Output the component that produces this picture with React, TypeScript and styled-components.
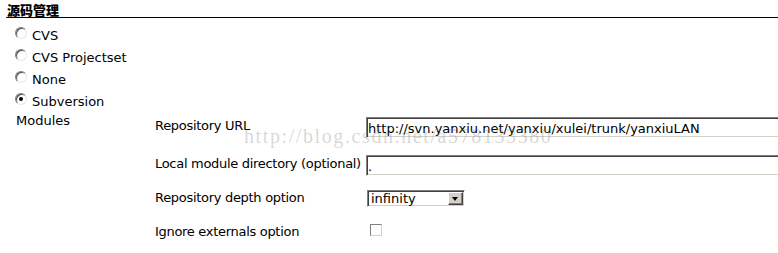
import React from 'react';
import styled, { createGlobalStyle } from 'styled-components';

const GlobalStyle = createGlobalStyle`
    body {
        margin: 0;
        background: #fff;
        font-family: "DejaVu Sans", Verdana, sans-serif;
        font-size: 13px;
        color: #000;
    }
`;

const Page = styled.div`
    position: relative;
    width: 778px;
    height: 253px;
    overflow: hidden;
`;

const SectionHeader = styled.div`
    margin-left: 6px;
    padding: 3px 0 0 1px;
    height: 14px;
    line-height: 14px;
    font-family: "Noto Sans CJK SC", sans-serif;
    font-size: 13px;
    font-weight: 900;
    border-bottom: 1px solid #000;
`;

const RadioList = styled.div`
    padding: 6px 0 0 15px;
`;

const RadioRow = styled.label`
    display: flex;
    align-items: center;
    gap: 5px;
    height: 22px;
`;

const Radio = styled.input.attrs({ type: 'radio' })`
    appearance: none;
    margin: 0 0 4px 0;
    width: 12px;
    height: 12px;
    border-radius: 50%;
    border: 1px solid #808080;
    border-right-color: #e8e8e8;
    border-bottom-color: #e8e8e8;
    box-shadow: inset 1px 1px 0 #505050;
    background: #fff;
    position: relative;
    &:checked::after {
        content: '';
        position: absolute;
        left: 3px;
        top: 3px;
        width: 4px;
        height: 4px;
        border-radius: 50%;
        background: #000;
    }
`;

const ModulesBlock = styled.div`
    display: grid;
    grid-template-columns: 139px 1fr;
    padding-left: 16px;
`;

const ModulesLabel = styled.div`
    padding-top: 1px;
`;

const Fields = styled.div`
    padding-top: 5px;
`;

const FieldRow = styled.div<{ $h: number }>`
    display: grid;
    grid-template-columns: 211px 1fr;
    align-items: start;
    height: ${p => p.$h}px;
`;

const FieldLabel = styled.div`
    padding-top: 1px;
    white-space: nowrap;
    letter-spacing: -0.3px;
`;

const TextBox = styled.input.attrs({ type: 'text', readOnly: true })`
    box-sizing: border-box;
    width: 440px;
    height: 21px;
    margin: 0;
    padding: 1px 1px 0 1px;
    font-family: "DejaVu Sans", Verdana, sans-serif;
    font-size: 13px;
    color: #000;
    border: 1px solid #808080;
    border-right-color: #fff;
    border-bottom-color: #fff;
    box-shadow: inset 1px 1px 0 #404040, inset -1px -1px 0 #d4d0c8;
    outline: none;
`;

const SelectBox = styled.div`
    box-sizing: border-box;
    display: flex;
    width: 98px;
    height: 17px;
    margin-left: 1px;
    margin-top: 1px;
    border: 1px solid #808080;
    border-right-color: #fff;
    border-bottom-color: #fff;
    box-shadow: inset 1px 1px 0 #404040, inset -1px -1px 0 #d4d0c8;
    padding: 1px;
`;

const SelectText = styled.span`
    flex: 1;
    padding-left: 2px;
    line-height: 13px;
`;

const DropButton = styled.span`
    box-sizing: border-box;
    display: flex;
    align-items: center;
    justify-content: center;
    width: 15px;
    background: #d4d0c8;
    border: 1px solid #fff;
    border-right-color: #404040;
    border-bottom-color: #404040;
    box-shadow: inset -1px -1px 0 #808080;
    &::after {
        content: '';
        margin: 1px 1px 0 0;
        border-left: 3px solid transparent;
        border-right: 3px solid transparent;
        border-top: 4px solid #000;
    }
`;

const CheckBox = styled.input.attrs({ type: 'checkbox' })`
    appearance: none;
    margin: 1px 0 0 4px;
    width: 12px;
    height: 12px;
    border: 1px solid #808080;
    border-right-color: #d4d0c8;
    border-bottom-color: #d4d0c8;
    background: #fff;
`;

// csdn watermark lying over the form
const Watermark = styled.div`
    position: absolute;
    left: 244px;
    top: 125px;
    font-family: "Liberation Serif", serif;
    font-size: 20px;
    letter-spacing: 1.6px;
    color: rgba(120, 120, 120, 0.3);
    pointer-events: none;
    white-space: nowrap;
`;

const scmOptions = [
    { name: 'CVS', checked: false },
    { name: 'CVS Projectset', checked: false },
    { name: 'None', checked: false },
    { name: 'Subversion', checked: true },
];

const App = () => {
  return (
    <Page>
      <GlobalStyle />
      <SectionHeader>源码管理</SectionHeader>
      <RadioList>
        {scmOptions.map(o => (
          <RadioRow key={o.name}>
            <Radio name="scm" defaultChecked={o.checked} />
            {o.name}
          </RadioRow>
        ))}
      </RadioList>
      <ModulesBlock>
        <ModulesLabel>Modules</ModulesLabel>
        <Fields>
          <FieldRow $h={38}>
            <FieldLabel>Repository URL</FieldLabel>
            <TextBox value="http://svn.yanxiu.net/yanxiu/xulei/trunk/yanxiuLAN" />
          </FieldRow>
          <FieldRow $h={34}>
            <FieldLabel>Local module directory (optional)</FieldLabel>
            <TextBox value="." />
          </FieldRow>
          <FieldRow $h={34}>
            <FieldLabel>Repository depth option</FieldLabel>
            <SelectBox>
              <SelectText>infinity</SelectText>
              <DropButton />
            </SelectBox>
          </FieldRow>
          <FieldRow $h={30}>
            <FieldLabel>Ignore externals option</FieldLabel>
            <CheckBox />
          </FieldRow>
        </Fields>
      </ModulesBlock>
      <Watermark>http://blog.csdn.net/a578133380</Watermark>
    </Page>
  );
};

export default App;
